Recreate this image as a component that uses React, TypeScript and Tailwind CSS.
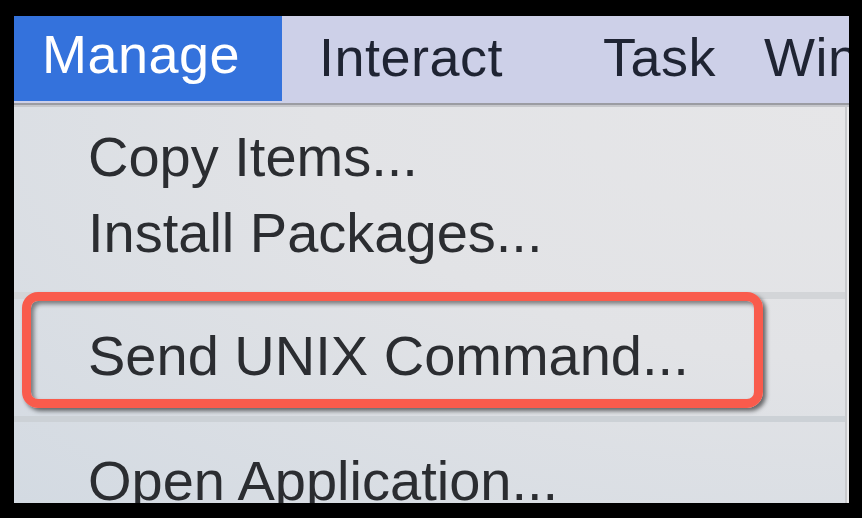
const MENU_BAR = [
  { label: "Interact", w: "w-[284px]" },
  { label: "Task", w: "w-[161px]" },
  { label: "Window", w: "w-[200px]" },
] as const;

function MenuItem({ label, className = "" }: { label: string; className?: string }) {
  return (
    <div className={`h-[76px] whitespace-nowrap pl-[74px] text-[56px] leading-[76px] text-[#2b2d31] ${className}`}>
      {label}
    </div>
  );
}

export default function App() {
  return (
    <div className="flex h-[518px] w-[862px] bg-black pb-[15px] pl-[14px] pr-[13px] pt-[16px] font-['Liberation_Sans',Arial,sans-serif]">
      <div className="flex min-w-0 flex-1 flex-col overflow-hidden">
        {/* menu bar */}
        <div className="flex h-[87px] shrink-0 items-center overflow-hidden bg-[#cdd0e8] pb-[5px] text-[54px] tracking-[0.5px] text-[#1f2433]">
          <div className="flex h-[87px] w-[268px] shrink-0 items-center bg-[#3472dc] pb-[5px] pl-[28px] text-white">
            Manage
          </div>
          <div className="flex shrink-0 pl-[37px]">
            {MENU_BAR.map((item) => (
              <span key={item.label} className={`${item.w} shrink-0 whitespace-nowrap`}>
                {item.label}
              </span>
            ))}
          </div>
        </div>
        <div className="h-[2px] shrink-0 bg-[#9b9ca2]" />
        <div className="h-[2px] shrink-0 bg-[#c6c7cb]" />

        {/* dropdown */}
        <div className="relative flex flex-1 overflow-hidden bg-[radial-gradient(ellipse_at_top_right,#e6e6e8_0%,#e2e3e6_45%,#d3dae2_100%)]">
          <div className="flex-1 pt-[12px]">
            <MenuItem label="Copy Items..." />
            <MenuItem label="Install Packages..." />
            <div className="mt-[21px] h-[7px] bg-[#d3d5d8]" />
            <MenuItem label="Send UNIX Command..." className="mt-[19px]" />
            <div className="mt-[22px] h-[6px] bg-[#ccd1d6]" />
            <MenuItem label="Open Application..." className="mt-[21px]" />
          </div>
          {/* scrollbar track */}
          <div className="w-[4px] shrink-0 border-l-2 border-[#c9cacd] bg-[#ebebec]" />

          {/* highlight annotation */}
          <div className="pointer-events-none absolute left-[8px] top-[185px] h-[116px] w-[741px] rounded-[16px] border-[9px] border-[#f95b4c] shadow-[3px_3px_4px_rgba(0,0,0,0.55),inset_3px_3px_4px_rgba(0,0,0,0.45)]" />
        </div>
      </div>
    </div>
  );
}
